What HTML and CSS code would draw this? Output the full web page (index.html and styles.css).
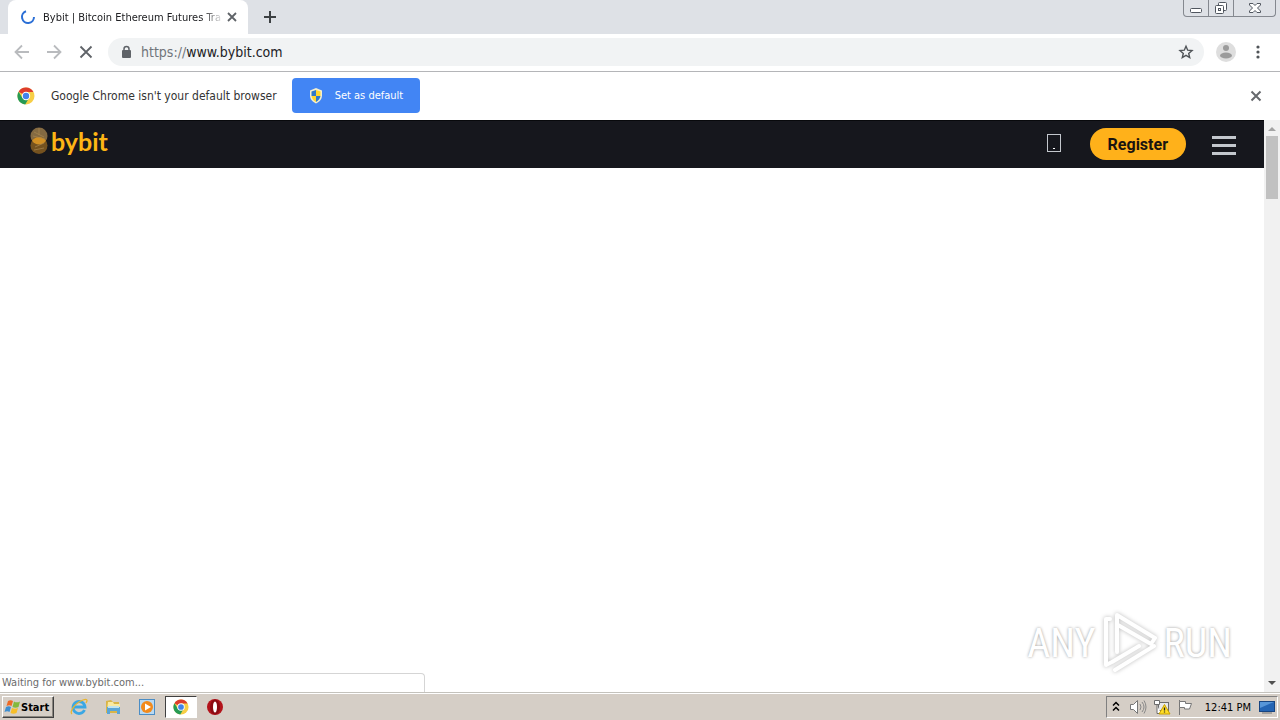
FILE: index.html
```html
<!DOCTYPE html>
<html lang="en">
<head>
    <meta charset="UTF-8">
    <meta name="viewport" content="width=device-width, initial-scale=1.0">
    <title>Bybit | Bitcoin Ethereum Futures Tra</title>
    <link rel="stylesheet" href="styles.css">
</head>
<body>
    <div class="tab-strip">
        <div class="tab">
            <svg class="spinner" width="16" height="16" viewBox="0 0 16 16"><path d="M6 2.3A6 6 0 1 0 14 8" fill="none" stroke="#2b6fd6" stroke-width="2"/></svg>
            <span class="tab-title">Bybit | Bitcoin Ethereum Futures Tra</span>
            <button class="icon-btn" aria-label="Close tab">
                <svg width="16" height="16" viewBox="0 0 16 16"><path d="M4 4l8 8M12 4l-8 8" stroke="#5f6368" stroke-width="1.8"/></svg>
            </button>
        </div>
        <button class="icon-btn new-tab" aria-label="New tab">
            <svg width="16" height="16" viewBox="0 0 16 16"><path d="M8 2v12M2 8h12" stroke="#3c4043" stroke-width="2"/></svg>
        </button>
        <div class="window-buttons">
            <button class="win-btn" aria-label="Minimize">
                <svg width="14" height="14" viewBox="0 0 14 14"><rect x="1.5" y="7.5" width="11" height="4" rx="1" fill="#fff" stroke="#50565f"/></svg>
            </button>
            <button class="win-btn" aria-label="Restore">
                <svg width="14" height="14" viewBox="0 0 14 14" fill="#fff" stroke="#50565f"><rect x="4.5" y="1.5" width="8" height="8" rx="1"/><rect x="1.5" y="4.5" width="8" height="8" rx="1"/><rect x="4.5" y="7.5" width="2" height="2"/></svg>
            </button>
            <button class="win-btn win-close" aria-label="Close">
                <svg width="14" height="14" viewBox="0 0 14 14"><path d="M1.5 2.5h3.5l2 2 2-2h3.5v1.5l-3 3 3 3v1.5h-3.5l-2-2-2 2h-3.5v-1.5l3-3-3-3z" fill="#fff" stroke="#50565f"/></svg>
            </button>
        </div>
    </div>

    <div class="toolbar">
        <button class="icon-btn" aria-label="Back">
            <svg width="16" height="16" viewBox="0 0 16 16"><path d="M15 8H2M8 1.5L1.5 8 8 14.5" fill="none" stroke="#b9bbbe" stroke-width="1.8"/></svg>
        </button>
        <button class="icon-btn" aria-label="Forward">
            <svg width="16" height="16" viewBox="0 0 16 16"><path d="M1 8h13M8 1.5L14.5 8 8 14.5" fill="none" stroke="#b9bbbe" stroke-width="1.8"/></svg>
        </button>
        <button class="icon-btn" aria-label="Stop loading">
            <svg width="16" height="16" viewBox="0 0 16 16"><path d="M2.5 2.5l11 11M13.5 2.5l-11 11" stroke="#5f6368" stroke-width="1.8"/></svg>
        </button>
        <div class="omnibox">
            <svg width="12" height="14" viewBox="0 0 12 14"><rect x="2" y="5" width="9" height="8" rx="1" fill="#5f6368"/><path d="M4 6V4a2.5 2.5 0 0 1 5 0v2" fill="none" stroke="#5f6368" stroke-width="1.5"/></svg>
            <a class="url" href="https://www.bybit.com"><span class="scheme">https://</span>www.bybit.com</a>
            <button class="icon-btn" aria-label="Bookmark this page">
                <svg width="16" height="16" viewBox="0 0 16 16"><path d="M8 2.2l1.7 4 4.3.4-3.3 2.8 1 4.2L8 11.4l-3.7 2.2 1-4.2L2 6.6l4.3-.4z" fill="none" stroke="#505458" stroke-width="1.4"/></svg>
            </button>
        </div>
        <button class="icon-btn profile" aria-label="Profile">
            <svg width="20" height="20" viewBox="0 0 20 20"><circle cx="10" cy="10" r="10" fill="#dedede"/><circle cx="10" cy="6" r="3" fill="#9b9b9b"/><ellipse cx="10" cy="13.5" rx="6" ry="3" fill="#9b9b9b"/></svg>
        </button>
        <button class="icon-btn" aria-label="Menu">
            <svg width="16" height="16" viewBox="0 0 16 16" fill="#505458"><circle cx="8" cy="3" r="1.6"/><circle cx="8" cy="8" r="1.6"/><circle cx="8" cy="13" r="1.6"/></svg>
        </button>
    </div>

    <div class="infobar">
        <svg width="18" height="18" viewBox="0 0 18 18"><use href="#chrome-logo"/></svg>
        <span class="info-text">Google Chrome isn't your default browser</span>
        <button class="default-btn">
            <svg width="14" height="16" viewBox="0 0 14 16"><path d="M7 0l6 2.5v5C13 11 10.5 14 7 15.5 3.5 14 1 11 1 7.5v-5z" fill="#f3efcf"/><path d="M7 2v6H2.5V3.5z" fill="#2f79c9"/><path d="M7 2l4.5 1.5V8H7z" fill="#ffd62e"/><path d="M2.5 8H7v6C4.5 12.5 2.8 10.5 2.5 8z" fill="#ffd62e"/><path d="M7 8h4.5C11.2 10.5 9.5 12.5 7 14z" fill="#2f79c9"/></svg>
            Set as default
        </button>
        <button class="icon-btn info-close" aria-label="Dismiss">
            <svg width="16" height="16" viewBox="0 0 16 16"><path d="M3.5 3.5l9 9M12.5 3.5l-9 9" stroke="#66696d" stroke-width="2"/></svg>
        </button>
    </div>

    <div class="viewport">
        <div class="page">
            <div class="site-header">
                <a class="logo" href="#">
                    <svg width="18" height="28" viewBox="0 0 18 28"><circle cx="9" cy="9" r="8.5" fill="#846a42"/><circle cx="9" cy="18.5" r="8.5" fill="#75521f"/><path d="M2 13.8a8.5 8.5 0 0 1 14 0 8.5 8.5 0 0 1-14 0z" fill="#d29024"/><path d="M4 5l10 5M3 9l12 3M5 20l9-4M4 23l10-2M9 1v7" stroke="#a98650" stroke-width=".7"/></svg>
                    <span>bybit</span>
                </a>
                <button class="icon-btn" aria-label="Mobile app">
                    <svg width="14" height="20" viewBox="0 0 14 20"><rect x=".5" y=".5" width="13" height="17" fill="none" stroke="#c3c7cd"/><path d="M6 14.5h2" stroke="#fff"/></svg>
                </button>
                <button class="register">Register</button>
                <button class="icon-btn" aria-label="Open menu">
                    <svg width="24" height="22" viewBox="0 0 24 22"><path d="M0 4.5h24M0 12.5h24M0 20.5h24" stroke="#c3c7cd" stroke-width="3"/></svg>
                </button>
            </div>
            <div class="watermark">
                <span>ANY</span>
                <svg class="play" width="58" height="62" viewBox="0 0 58 62" fill="none" stroke="#fff" stroke-width="4" stroke-linejoin="round" stroke-linecap="round"><path d="M9 7H5v46l6-3 27-16M16 40V3l38 23-4 6-33-19M14 58l39-24"/></svg>
                <span>RUN</span>
            </div>
            <div class="status-bubble">Waiting for www.bybit.com...</div>
        </div>
        <div class="scrollbar">
            <svg width="16" height="15" viewBox="0 0 16 15"><path d="M4 10l4-4 4 4z" fill="#a3a3a3"/></svg>
            <div class="thumb"></div>
            <svg class="scroll-down" width="16" height="17" viewBox="0 0 16 17"><path d="M4 6l4 4 4-4z" fill="#505050"/></svg>
        </div>
    </div>

    <div class="taskbar">
        <button class="start">
            <svg width="17" height="16" viewBox="0 0 17 16"><path d="M4 2c2-1.3 3.5-1 5 0L7.5 7C6 6 4.5 6 2.5 7z" fill="#ee6a25"/><path d="M10 2.5c2 1.3 4 1 6 0L14.5 8c-2 1-4 1-6 0z" fill="#83b93c"/><path d="M2 8c2-1 3.5-1 5 0l-1.5 5c-1.5-1-3-1-5 0z" fill="#3e8ed0"/><path d="M8 9c2 1 4 1 6 0l-1.5 5c-2 1-4 1-6 0z" fill="#f7be28"/></svg>
            Start
        </button>
        <div class="quick-launch">
            <button class="task" aria-label="Internet Explorer">
                <svg width="18" height="18" viewBox="0 0 18 18" fill="none"><path d="M14.5 12a6 6 0 1 1 .5-3H4" stroke="#3aa7e4" stroke-width="2.8"/><path d="M2 16C-1 14 5 5 13 2c4-1.5 5 0 3 3" stroke="#e9b52e" stroke-width="1.3"/></svg>
            </button>
            <button class="task" aria-label="Windows Explorer">
                <svg width="18" height="18" viewBox="0 0 18 18"><path d="M2 3l5-1 2 2h6v11H2z" fill="#d9b548"/><path d="M4 4h5l1 2h6v7H3z" fill="#f9e9a0"/><path d="M3 9h13v7h-3v-3H6v3H3z" fill="#5aa5d6"/><path d="M4 8h11v2H4z" fill="#bfe3ef"/></svg>
            </button>
            <button class="task" aria-label="Media Player">
                <svg width="18" height="18" viewBox="0 0 18 18"><rect x="1.5" y="1.5" width="15" height="15" fill="#b9d9f2" stroke="#4b8dc5"/><circle cx="9" cy="9" r="6" fill="#f28a1c"/><path d="M7 5.5l6 3.5-6 3.5z" fill="#fff"/></svg>
            </button>
            <button class="task active" aria-label="Google Chrome">
                <svg width="16" height="16" viewBox="0 0 18 18"><g id="chrome-logo"><circle cx="9" cy="9" r="8.5" fill="#f7ce46"/><path d="M9 9L1.6 4.7A8.5 8.5 0 0 1 16.4 5H9z" fill="#dd3c2d"/><path d="M1.6 4.7a8.5 8.5 0 0 0 6.6 12.8L12 11 9 9 5.5 11z" fill="#269a54"/><circle cx="9" cy="9" r="4.2" fill="#fff"/><circle cx="9" cy="9" r="3.2" fill="#4283ea"/></g></svg>
            </button>
            <button class="task" aria-label="Opera">
                <svg width="18" height="18" viewBox="0 0 18 18"><circle cx="9" cy="9" r="8" fill="#b3131b"/><ellipse cx="9" cy="9" rx="5" ry="7.5" fill="#8b0b12"/><ellipse cx="9" cy="9" rx="2" ry="5.5" fill="#fff"/></svg>
            </button>
        </div>
        <div class="tray">
            <svg width="10" height="14" viewBox="0 0 10 14"><path d="M2 5.5l3-3 3 3M2 10.5l3-3 3 3" fill="none" stroke="#000" stroke-width="1.5"/></svg>
            <svg class="speaker" width="18" height="16" viewBox="0 0 18 16"><path d="M1.5 5.5h3l4-4v13l-4-4h-3z" fill="#fff" stroke="#777"/><path d="M11 5q2 3 0 6M13 3q4 5 0 10M15 1.5q4 6.5 0 13" fill="none" stroke="#888"/></svg>
            <svg width="18" height="16" viewBox="0 0 18 16"><rect x="5.5" y="3.5" width="10" height="8" fill="#e8e8e8" stroke="#6c6c6c"/><path d="M1.5 1.5h5v4h-5zM4 6v8.5h4" fill="#fff" stroke="#6c6c6c"/><path d="M11.5 5.5L17 15H6z" fill="#ffdd27" stroke="#c9a000"/><path d="M11.5 8.5v3M11.5 12.5v1" stroke="#222" stroke-width="1.3"/></svg>
            <svg width="18" height="16" viewBox="0 0 18 16"><path d="M2.5 1v15" stroke="#777"/><path d="M2.5 2.5h6v2h6l-2 5.5h-5V8.5h-5z" fill="#fff" stroke="#777"/></svg>
            <span class="clock">12:41 PM</span>
            <svg width="16" height="14" viewBox="0 0 16 14"><rect x=".5" y="1.5" width="15" height="10" fill="#2465b4" stroke="#174581"/><path d="M1 2h14L1 8z" fill="#5796d8"/><path d="M3 13h10" stroke="#777"/></svg>
        </div>
    </div>
</body>
</html>
```
FILE: styles.css
```css
* {
    box-sizing: border-box;
}

body {
    margin: 0;
    height: 100vh;
    display: flex;
    flex-direction: column;
    overflow: hidden;
    font-family: Tahoma, "DejaVu Sans Condensed", "Noto Sans", sans-serif;
    font-size: 11px;
    color: #333;
    background: #fff;
}

button {
    font: inherit;
    color: inherit;
    border: none;
    padding: 0;
    background: none;
}

svg {
    display: block;
    flex: none;
}

a {
    text-decoration: none;
}

.icon-btn {
    flex: none;
}

/* Tabs */
.tab-strip {
    display: flex;
    height: 34px;
    flex: none;
    padding-left: 8px;
    background: #dee1e6;
}

.tab {
    display: flex;
    align-items: center;
    width: 240px;
    padding: 0 8px 0 12px;
    background: #fff;
    border-radius: 8px 8px 0 0;
}

.tab-title {
    flex: 1;
    margin: 0 0 0 7px;
    white-space: nowrap;
    color: #202124;
    mask-image: linear-gradient(to right, #000 88%, transparent);
}

.new-tab {
    margin-left: 14px;
}

.window-buttons {
    display: flex;
    height: 17px;
    margin: 0 4px 0 auto;
    border: 1px solid #84888f;
    border-top: none;
    border-radius: 0 0 4px 4px;
}

.win-btn {
    display: flex;
    justify-content: center;
    width: 25px;
    padding-top: 1px;
    border-right: 1px solid #84888f;
}

.win-close {
    width: 41px;
    border-right: none;
}

/* Toolbar */
.toolbar {
    display: flex;
    align-items: center;
    gap: 16px;
    height: 38px;
    flex: none;
    padding: 0 14px 1px;
    border-bottom: 1px solid #b4b5b8;
}

.omnibox {
    display: flex;
    align-items: center;
    flex: 1;
    height: 28px;
    margin-left: -2px;
    padding: 0 10px 0 12px;
    border-radius: 14px;
    background: #f1f3f4;
}

.url {
    flex: 1;
    margin-left: 9px;
    font-size: 14px;
    color: #202124;
}

.scheme {
    color: #70757a;
}

.profile {
    margin: 0 -2px 0 -4px;
}

/* Default browser bar */
.infobar {
    display: flex;
    align-items: center;
    height: 48px;
    flex: none;
    padding: 0 16px 1px 17px;
}

.info-text {
    margin: 0 15px 0 16px;
    font-size: 12px;
}

.default-btn {
    display: flex;
    align-items: center;
    gap: 12px;
    height: 35px;
    padding: 0 17px;
    border-radius: 4px;
    background: #4285f4;
    color: #fff;
}

.info-close {
    margin-left: auto;
}

/* Page */
.viewport {
    display: flex;
    flex: 1;
    min-height: 0;
}

.page {
    position: relative;
    flex: 1;
}

.site-header {
    display: flex;
    align-items: center;
    height: 48px;
    padding: 0 28px 0 30px;
    background: #16171d;
    box-shadow: inset 0 1px #08090c;
}

.logo {
    display: flex;
    align-items: center;
    gap: 3px;
    margin: 0 auto 6px 0;
    font-family: Lato, sans-serif;
    font-size: 25px;
    font-weight: 700;
    line-height: 28px;
    color: #fdb515;
}

.register {
    height: 32px;
    margin: 0 26px 0 29px;
    padding: 0 18px;
    border-radius: 16px;
    background: #ffb11a;
    color: #1a1410;
    font-family: Roboto, sans-serif;
    font-size: 16px;
    font-weight: 700;
}

.watermark {
    position: absolute;
    right: 32px;
    bottom: 18px;
    display: flex;
    align-items: center;
    gap: 5px;
    color: #fff;
    font-family: "Roboto Condensed", "Liberation Sans Narrow", sans-serif;
    font-size: 40px;
    font-weight: 400;
    text-shadow: 0 0 3px #999;
}

.play {
    filter: drop-shadow(0 0 2px #bbb);
}

.status-bubble {
    position: absolute;
    left: 0;
    bottom: 0;
    width: 425px;
    height: 19px;
    padding-left: 2px;
    border: 1px solid #d5d5d5;
    border-width: 1px 1px 0 0;
    border-radius: 0 4px 0 0;
    background: #fff;
    line-height: 18px;
    color: #6b6b6b;
}

.scrollbar {
    display: flex;
    flex-direction: column;
    width: 16px;
    padding-top: 1px;
    background: #f1f1f1;
}

.thumb {
    height: 63px;
    margin: 0 2px;
    background: #c1c1c1;
}

.scroll-down {
    margin-top: auto;
}

/* Taskbar */
.taskbar {
    display: flex;
    align-items: center;
    height: 28px;
    flex: none;
    padding: 1px 2px 0;
    background: #d5cec6;
    border-top: 1px solid #c4c2bc;
    box-shadow: inset 0 1px #fff;
    color: #000;
}

.start {
    display: flex;
    align-items: center;
    width: 52px;
    height: 22px;
    padding-left: 1px;
    border: 1px solid;
    border-color: #fff #404040 #404040 #fff;
    box-shadow: inset -1px -1px #8a867f;
    font-weight: 700;
}

.quick-launch {
    display: flex;
    gap: 2px;
    margin-left: 9px;
}

.task {
    display: flex;
    align-items: center;
    justify-content: center;
    width: 32px;
    height: 22px;
}

.task.active {
    border: 1px solid;
    border-color: #404040 #fff #fff #404040;
    background: #fff;
}

.tray {
    display: flex;
    align-items: center;
    gap: 6px;
    height: 22px;
    margin-left: auto;
    padding: 0 2px 0 4px;
    border: 1px solid;
    border-color: #808080 #fff #fff #808080;
}

.speaker {
    margin-left: 2px;
}

.clock {
    margin: 0 2px 0 4px;
}
```
